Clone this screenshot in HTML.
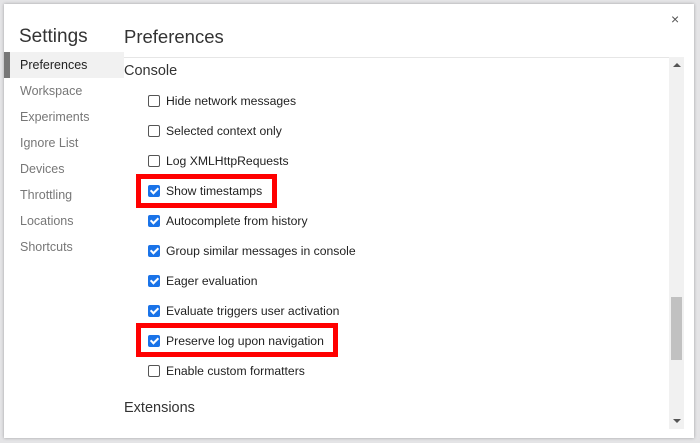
<!DOCTYPE html><html><head><style>
body{margin:0;width:700px;height:443px;background:#e4e4e6;position:relative;overflow:hidden;font-family:"Liberation Sans",sans-serif;}
.dlg{position:absolute;left:4px;top:4px;width:690px;height:434px;background:#fff;box-shadow:0 0 3px rgba(0,0,0,.3);}
.a{position:absolute;white-space:nowrap;}
.nav{position:absolute;left:20px;font-size:12.5px;color:#777;}
.row{position:absolute;left:148px;font-size:12.2px;color:#222;height:14px;line-height:14px;}
.cb{position:absolute;left:0;top:1px;width:10px;height:10px;border:1px solid #555;border-radius:2px;}
.cb.on{background:#1a73e8;border-color:#1a73e8;}
.cb.on:after{content:"";position:absolute;left:3px;top:0px;width:3px;height:6px;border:solid #fff;border-width:0 2px 2px 0;transform:rotate(45deg);}
.row span{position:absolute;left:18px;top:0;white-space:nowrap;}
.red{position:absolute;border:5px solid #f00;}
</style></head><body>
<div class="dlg"></div>
<div class="a" style="left:19px;top:26px;font-size:19px;color:#333">Settings</div>
<div class="a" style="left:124px;top:26px;font-size:18.5px;color:#333">Preferences</div>
<div class="a" style="left:671px;top:11px;font-size:14px;color:#555">×</div>
<div class="a" style="left:124px;top:57px;width:545px;height:1px;background:#e6e6e6"></div>
<div class="a" style="left:4px;top:52px;width:120px;height:26px;background:#f1f1f1"></div>
<div class="a" style="left:4px;top:52px;width:6px;height:26px;background:#777"></div>
<div class="nav" style="top:58px;color:#222">Preferences</div>
<div class="nav" style="top:84px">Workspace</div>
<div class="nav" style="top:110px">Experiments</div>
<div class="nav" style="top:136px">Ignore List</div>
<div class="nav" style="top:162px">Devices</div>
<div class="nav" style="top:188px">Throttling</div>
<div class="nav" style="top:214px">Locations</div>
<div class="nav" style="top:240px">Shortcuts</div>
<div class="a" style="left:124px;top:63px;font-size:14.5px;color:#333">Console</div>
<div class="a" style="left:124px;top:400px;font-size:14.5px;color:#333">Extensions</div>
<div class="row" style="top:94px"><div class="cb"></div><span>Hide network messages</span></div>
<div class="row" style="top:124px"><div class="cb"></div><span>Selected context only</span></div>
<div class="row" style="top:154px"><div class="cb"></div><span>Log XMLHttpRequests</span></div>
<div class="row" style="top:184px"><div class="cb on"></div><span>Show timestamps</span></div>
<div class="row" style="top:214px"><div class="cb on"></div><span>Autocomplete from history</span></div>
<div class="row" style="top:244px"><div class="cb on"></div><span>Group similar messages in console</span></div>
<div class="row" style="top:274px"><div class="cb on"></div><span>Eager evaluation</span></div>
<div class="row" style="top:304px"><div class="cb on"></div><span>Evaluate triggers user activation</span></div>
<div class="row" style="top:334px"><div class="cb on"></div><span>Preserve log upon navigation</span></div>
<div class="row" style="top:364px"><div class="cb"></div><span>Enable custom formatters</span></div>
<div class="red" style="left:136px;top:174px;width:131px;height:24px"></div>
<div class="red" style="left:136px;top:323px;width:192px;height:24px"></div>
<div class="a" style="left:669px;top:57px;width:15px;height:372px;background:#f1f1f1"></div>
<div class="a" style="left:671px;top:297px;width:11px;height:63px;background:#c1c1c1"></div>
<div class="a" style="left:673px;top:63px;width:0;height:0;border:4px solid transparent;border-bottom:4px solid #555;border-top:0"></div>
<div class="a" style="left:673px;top:419px;width:0;height:0;border:4px solid transparent;border-top:4px solid #555;border-bottom:0"></div>
</body></html>
